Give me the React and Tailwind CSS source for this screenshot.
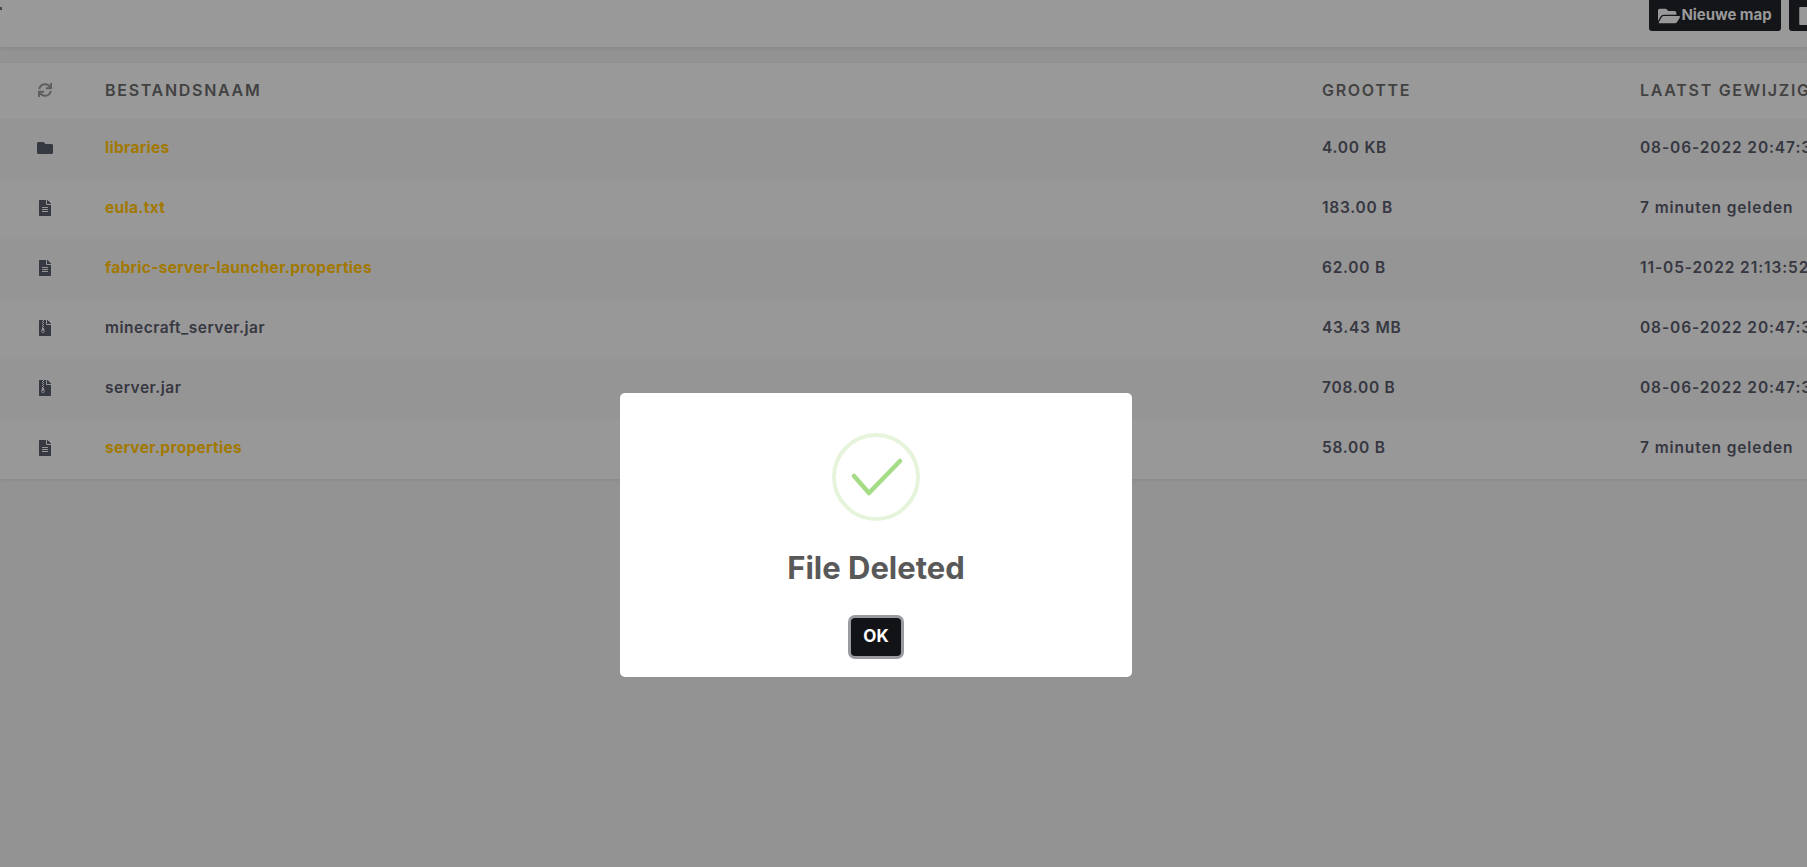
import React from "react";
import { FaSync, FaFolder, FaFileAlt, FaFileArchive, FaFolderOpen, FaFile } from "react-icons/fa";

const font = "[font-family:Inter,'Noto_Sans',sans-serif]";

const rows = [
  { icon: FaFolder, name: "libraries", size: "4.00 KB", date: "08-06-2022 20:47:38", link: true },
  { icon: FaFileAlt, name: "eula.txt", size: "183.00 B", date: "7 minuten geleden", link: true },
  { icon: FaFileAlt, name: "fabric-server-launcher.properties", size: "62.00 B", date: "11-05-2022 21:13:52", link: true },
  { icon: FaFileArchive, name: "minecraft_server.jar", size: "43.43 MB", date: "08-06-2022 20:47:38", link: false },
  { icon: FaFileArchive, name: "server.jar", size: "708.00 B", date: "08-06-2022 20:47:38", link: false },
  { icon: FaFileAlt, name: "server.properties", size: "58.00 B", date: "7 minuten geleden", link: true },
];

const cols = "grid grid-cols-[105px_1217px_318px_400px] items-center";

export default function App() {
  return (
    <div className={`relative h-[867px] w-[1807px] overflow-hidden bg-[#939393] ${font}`}>
      <header className="flex h-[47px] items-start justify-end gap-2 bg-[#999999] shadow-[0_1px_4px_rgba(0,0,0,0.1)] relative">
        <span className="absolute left-0 top-[7px] h-[3px] w-[2px] bg-[#444]" />
        <button className="flex h-[31px] w-[132px] items-center justify-center gap-[1px] rounded-b-[3px] bg-[#141518] text-[15px] font-bold tracking-[-0.05px] text-[#999999]">
          <FaFolderOpen className="text-[22px]" />
          Nieuwe map
        </button>
        <button className="flex h-[31px] w-[18px] items-center justify-start overflow-hidden rounded-bl-[3px] bg-[#141518] pl-2 text-[#999999]">
          <FaFile className="shrink-0 text-[18px]" />
        </button>
      </header>

      <main className="mt-4 w-[2040px] shadow-[0_1px_3px_rgba(0,0,0,0.08)]">
        <div className={`${cols} h-[56px] bg-[#999999] pb-[2px] text-[16px] font-semibold tracking-[1.7px] text-[#424242]`}>
          <div className="flex justify-center pr-[16px]">
            <FaSync className="text-[14px] text-[#5e5e5e]" />
          </div>
          <div>BESTANDSNAAM</div>
          <div>GROOTTE</div>
          <div className="whitespace-nowrap">LAATST GEWIJZIGD</div>
        </div>
        {rows.map((r, i) => {
          const Icon = r.icon;
          return (
            <div
              key={r.name}
              className={`${cols} h-[60px] pb-[2px] text-[15.5px] font-semibold text-[#363741] ${i % 2 === 0 ? "bg-[#959595]" : "bg-[#989898]"}`}
            >
              <div className="flex justify-center pr-[16px]">
                <Icon className="text-[16px] text-[#363842]" />
              </div>
              <div className={r.link ? "font-bold tracking-[0.3px] text-[#a27800]" : "tracking-[0.5px]"}>{r.name}</div>
              <div className="tracking-[0.75px]">{r.size}</div>
              <div className="whitespace-nowrap tracking-[0.9px]">{r.date}</div>
            </div>
          );
        })}
      </main>

      <div role="dialog" className="absolute left-[620px] top-[393px] flex h-[284px] w-[512px] flex-col items-center rounded-[5px] bg-white pt-10">
        <div className="flex h-[88px] w-[88px] items-center justify-center rounded-full border-4 border-[#e5f4db]">
          <svg width="52" height="40" viewBox="0 0 52 40" fill="none" className="mt-[2px] ml-[1px]">
            <path d="M3 17 L18 34 L49 2" transform="translate(0,1)" stroke="#a5dc86" strokeWidth="4.5" strokeLinecap="round" strokeLinejoin="round" />
          </svg>
        </div>
        <h2 className="mt-[29px] text-[31px] leading-[36px] font-bold text-[#595959]">File Deleted</h2>
        <button className="mt-[32px] h-[38px] w-[50px] rounded-[4px] bg-[#121316] text-[17px] font-bold text-white ring-[3px] ring-[#9a9ba0]">
          OK
        </button>
      </div>
    </div>
  );
}
